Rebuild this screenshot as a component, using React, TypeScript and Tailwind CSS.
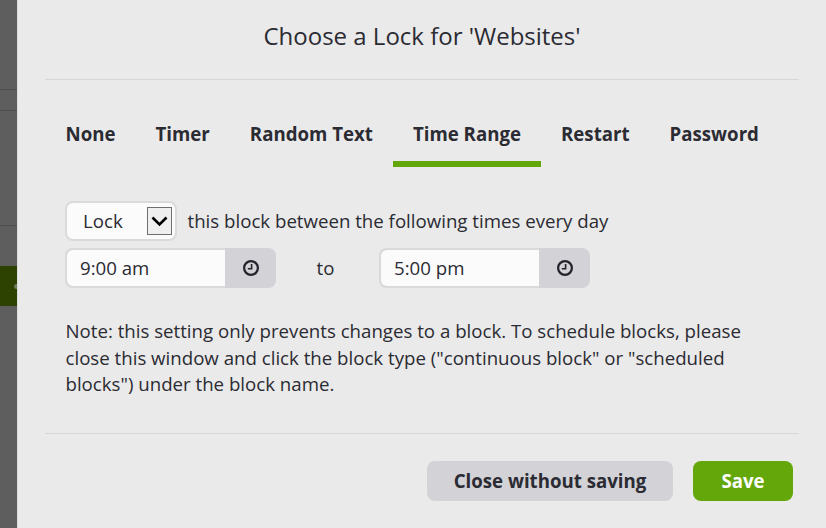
const tabs = ["None", "Timer", "Random Text", "Time Range", "Restart", "Password"];

const ClockIcon = () => (
  <svg width="16" height="16" viewBox="0 0 16 16" fill="none" stroke="#22222a">
    <circle cx="8" cy="8" r="6.9" strokeWidth="2.2" />
    <path d="M8.6 4V8.8H4.8" strokeWidth="1.6" />
  </svg>
);

const TimeInput = ({ value }: { value: string }) => (
  <div className="flex h-10 w-[211px] rounded-lg bg-[#d2d2d7]">
    <div className="flex w-[160px] items-center rounded-l-lg border-2 border-r-0 border-[#dadada] bg-[#fbfbfb] pl-[13px]">
      {value}
    </div>
    <div className="flex flex-1 items-center justify-center">
      <ClockIcon />
    </div>
  </div>
);

const App = () => {
  return (
    <div className="flex h-[528px] w-[826px] overflow-hidden bg-[#5e5e5e] font-['Open_Sans',sans-serif] text-[#2b2b33]">
      <div className="flex w-[17px] shrink-0 flex-col">
        <div className="h-[90px] border-b border-[#505050]" />
        <div className="h-[21px] border-b border-[#505050]" />
        <div className="h-[115px] border-b border-[#505050]" />
        <div className="mt-10 flex h-10 items-center justify-end bg-[#2d4100]">
          <div className="h-[5px] w-[3px] rounded-l-full bg-[#6d7a5a]" />
        </div>
      </div>
      <div className="flex min-w-0 flex-1 flex-col border-l border-[#dcdcdc] bg-[#eaeaea] pl-[27px] pr-[27px]">
        <h1 className="flex h-[79px] items-center justify-center pb-2 text-[24px] leading-8">
          Choose a Lock for 'Websites'
        </h1>
        <div className="border-t border-[#d6d6d6]" />
        <div className="ml-[0.5px] mt-[30px] flex">
          {tabs.map((tab) => (
            <div
              key={tab}
              className={
                tab === "Time Range"
                  ? "flex h-[57px] items-center border-b-[6px] border-[#64a70b] px-5 pb-1 text-[18.67px] font-bold"
                  : "flex h-[57px] items-center border-b-[6px] border-transparent px-5 pb-1 text-[18.67px] font-bold"
              }
            >
              {tab}
            </div>
          ))}
        </div>
        <div className="mt-[34px] flex items-center pl-5 text-[18.67px]">
          <div className="mr-[10px] flex h-10 w-[112px] items-center justify-between rounded-lg border-2 border-[#dadada] bg-[#fbfbfb] pl-4 pr-[3px]">
            <span>Lock</span>
            <div className="flex h-[28px] w-[25px] items-center justify-center border border-[#6f6f6f] bg-[#efefef]">
              <svg width="17" height="11" viewBox="0 0 17 11" fill="none" stroke="#000" strokeWidth="2.6">
                <path d="M1.5 1.5 8.5 8.5 15.5 1.5" />
              </svg>
            </div>
          </div>
          <span className="ml-[0.5px]">this block between the following times every day</span>
        </div>
        <div className="mt-[7px] flex items-center pl-5 text-[18.67px]">
          <TimeInput value="9:00 am" />
          <span className="w-[103px] pl-[40.5px]">to</span>
          <TimeInput value="5:00 pm" />
        </div>
        <p className="mt-[30px] w-[700px] pl-[20.5px] text-[18.67px] leading-[26.5px]">
          Note: this setting only prevents changes to a block. To schedule blocks, please close this window and click the block type ("continuous block" or "scheduled blocks") under the block name.
        </p>
        <div className="mt-[35px] border-t border-[#d6d6d6]" />
        <div className="mt-[27px] flex justify-end gap-5 pr-[6px] text-[18.67px] font-bold">
          <button className="h-10 w-[246px] rounded-lg bg-[#d2d2d7]">Close without saving</button>
          <button className="h-10 w-[100px] rounded-lg bg-[#64a70b] text-white">Save</button>
        </div>
      </div>
    </div>
  );
};

export default App;
